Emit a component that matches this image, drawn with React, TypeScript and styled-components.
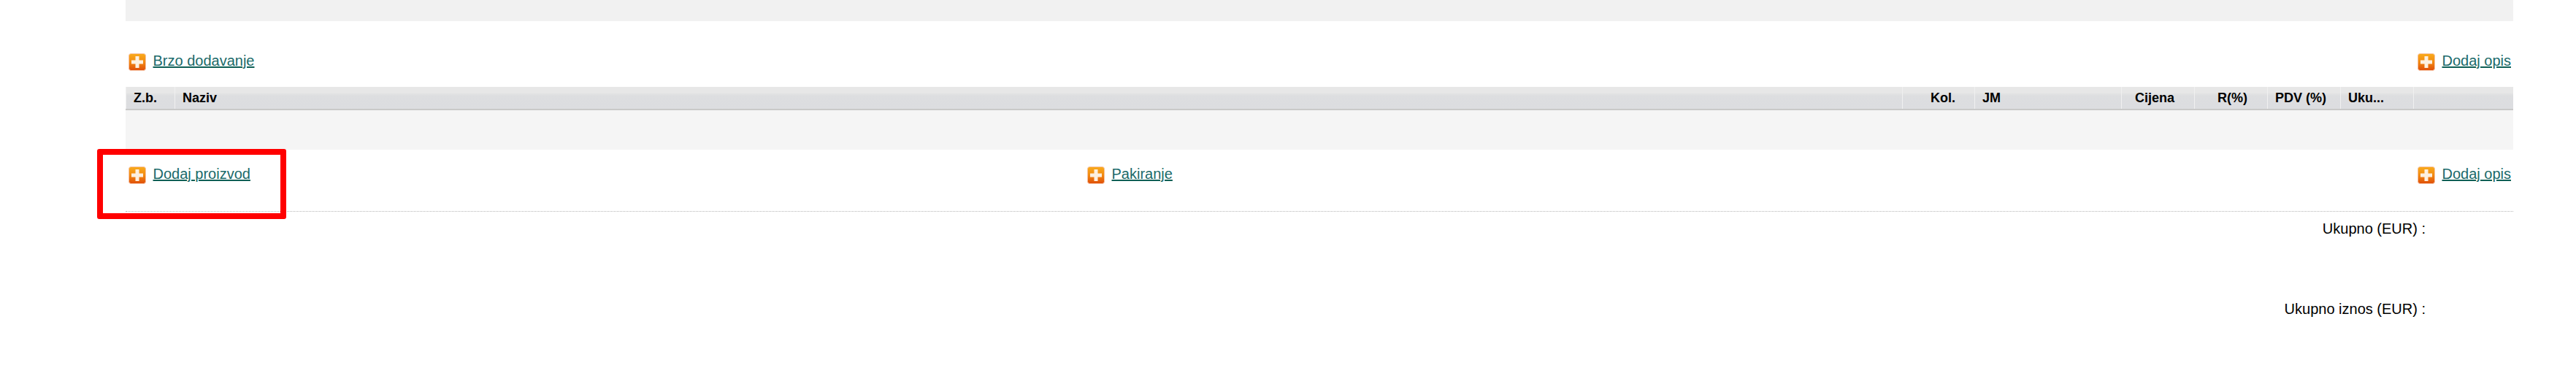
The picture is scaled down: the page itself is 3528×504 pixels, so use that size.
import React from 'react';
import styled, { createGlobalStyle } from 'styled-components';

const GlobalStyle = createGlobalStyle`
	html, body {
		margin: 0;
		padding: 0;
		background: #fff;
		font-family: "Liberation Sans", Arial, sans-serif;
	}
`;

interface Column {
	label: string;
	width: string;
	align?: 'left' | 'right';
	inset?: number;
}

const columns: Column[] = [
	{ label: 'Z.b.', width: '68px' },
	{ label: 'Naziv', width: '1fr' },
	{ label: 'Kol.', width: '99px', align: 'right', inset: 26 },
	{ label: 'JM', width: '201px' },
	{ label: 'Cijena', width: '100px', align: 'right', inset: 27 },
	{ label: 'R(%)', width: '100px', align: 'right', inset: 27 },
	{ label: 'PDV (%)', width: '100px' },
	{ label: 'Uku...', width: '100px' },
	{ label: '', width: '136px' },
];

const PlusIcon: React.FC = (): JSX.Element => (
	<IconSvg width="24" height="24" viewBox="0 0 24 24" aria-hidden="true">
		<defs>
			<linearGradient id="plus-fill" x1="0" y1="0" x2="0" y2="1">
				<stop offset="0" stopColor="#f9ab1c" />
				<stop offset="0.5" stopColor="#f28a12" />
				<stop offset="1" stopColor="#df4d08" />
			</linearGradient>
		</defs>
		<rect x="0.5" y="0.5" width="23" height="23" rx="3" fill="url(#plus-fill)" stroke="#f6c3a4" />
		<path d="M9.5 4h5v5.5H20v5h-5.5V20h-5v-5.5H4v-5h5.5z" fill="#fdf0e0" />
	</IconSvg>
);

const AddLink: React.FC<{ label: string }> = ({ label }): JSX.Element => (
	<LinkWrap>
		<PlusIcon />
		<LinkText href="#">{label}</LinkText>
	</LinkWrap>
);

const App: React.FC = (): JSX.Element => {
	return (
		<>
			<GlobalStyle />
			<Page>
				<TopBand />
				<ActionRow>
					<AddLink label="Brzo dodavanje" />
					<AddLink label="Dodaj opis" />
				</ActionRow>
				<HeaderRow $columns={columns.map((c) => c.width).join(' ')}>
					{columns.map((c, i) => (
						<HeaderCell key={i} $align={c.align} $inset={c.inset}>
							{c.label}
						</HeaderCell>
					))}
				</HeaderRow>
				<EmptyBody />
				<ProductRow>
					<AddLink label="Dodaj proizvod" />
					<AddLink label="Pakiranje" />
					<AddLink label="Dodaj opis" />
					<Highlight />
				</ProductRow>
				<TotalRow>Ukupno (EUR) :</TotalRow>
				<TotalRow>Ukupno iznos (EUR) :</TotalRow>
			</Page>
		</>
	);
};

const Page = styled.div`
	width: 3270px;
	height: 504px;
	margin-left: 172px;
	overflow: visible;
`;

const TopBand = styled.div`
	height: 29px;
	background: #f1f1f1;
`;

const ActionRow = styled.div`
	height: 90px;
	padding: 44px 3px 0 4px;
	box-sizing: border-box;
	display: flex;
	justify-content: space-between;
	align-items: flex-start;
`;

const HeaderRow = styled.div<{ $columns: string }>`
	height: 32px;
	box-sizing: border-box;
	display: grid;
	grid-template-columns: ${(p) => p.$columns};
	background: linear-gradient(#e7e7e7 0%, #e7e7e7 25%, #dddee0 40%, #dcdde0 100%);
	border-bottom: 2px solid #c9c9c9;
`;

const HeaderCell = styled.div<{ $align?: 'left' | 'right'; $inset?: number }>`
	display: flex;
	align-items: center;
	justify-content: ${(p) => (p.$align === 'right' ? 'flex-end' : 'flex-start')};
	padding: 1px ${(p) => p.$inset ?? 10}px 0 10px;
	border-right: 1px solid #f0f0f0;
	font-size: 18px;
	font-weight: 700;
	color: #000;
	white-space: nowrap;
	overflow: hidden;
	&:first-child {
		border-left: 1px solid #f0f0f0;
	}
	&:last-child {
		border-right: none;
	}
`;

const EmptyBody = styled.div`
	height: 54px;
	background: #f5f5f5;
`;

const ProductRow = styled.div`
	position: relative;
	height: 85px;
	box-sizing: border-box;
	padding: 23px 3px 0 4px;
	display: grid;
	grid-template-columns: 1313px 1fr auto;
	align-items: start;
	border-bottom: 1px dotted #b5b5b5;
`;

const Highlight = styled.div`
	position: absolute;
	left: -39px;
	top: -1px;
	width: 259px;
	height: 96px;
	box-sizing: border-box;
	border: 8px solid #ff0000;
	border-radius: 3px;
	pointer-events: none;
`;

const LinkWrap = styled.span`
	display: inline-flex;
	align-items: flex-start;
	gap: 9.5px;
	height: 24px;
`;

const IconSvg = styled.svg`
	flex: none;
	display: block;
`;

const LinkText = styled.a`
	font-size: 20px;
	line-height: 20px;
	color: #1a6a6a;
	text-decoration: underline;
	text-decoration-color: #0f5f55;
	text-decoration-thickness: 2px;
	white-space: nowrap;
`;

const TotalRow = styled.div`
	width: 3150px;
	height: 110px;
	padding-top: 11px;
	box-sizing: border-box;
	text-align: right;
	font-size: 20px;
	line-height: 24px;
	color: #000;
`;

export default App;
